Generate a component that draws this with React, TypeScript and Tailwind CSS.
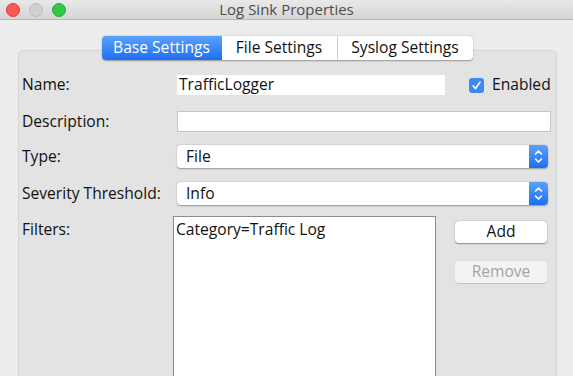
import React from "react";

function Stepper() {
  return (
    <div className="w-[19px] h-full rounded-r-[4px] bg-gradient-to-b from-[#5aa1fb] to-[#1c6ef2] flex items-center justify-center">
      <svg width="9" height="15" viewBox="0 0 9 15" fill="none" stroke="white" strokeWidth="1.6" strokeLinecap="round" strokeLinejoin="round">
        <path d="M1.5 5 L4.5 2 L7.5 5" />
        <path d="M1.5 10 L4.5 13 L7.5 10" />
      </svg>
    </div>
  );
}

function Select({ value }: { value: string }) {
  return (
    <div className="ml-[155px] w-[371px] h-[23px] bg-white rounded-[4px] shadow-[0_0.5px_1.5px_rgba(0,0,0,0.35)] flex items-stretch">
      <div className="flex-1 pl-[9px] flex items-center">{value}</div>
      <Stepper />
    </div>
  );
}

export default function App() {
  return (
    <div
      className="w-[573px] h-[376px] bg-[#ececec] overflow-hidden flex flex-col text-[15.6px] text-[#111]"
      style={{ fontFamily: '"Open Sans", "DejaVu Sans", sans-serif' }}
    >
      {/* Title bar */}
      <div className="h-[20px] shrink-0 bg-gradient-to-b from-[#e9e9e9] to-[#d5d5d5] border-b border-[#b8b8b8] flex items-center relative">
        <div className="flex items-center gap-[9px] pl-[6px]">
          <div className="w-[14px] h-[14px] rounded-full bg-[#fc5753] border border-[#df3d39]" />
          <div className="w-[14px] h-[14px] rounded-full bg-[#d0d0d0] border border-[#bdbdbd]" />
          <div className="w-[14px] h-[14px] rounded-full bg-[#33c748] border border-[#27aa35]" />
        </div>
        <div className="absolute inset-0 flex items-center justify-center text-[15px] text-[#4d4d4d]">Log Sink Properties</div>
      </div>

      {/* Body */}
      <div className="flex-1 relative pt-[16px]">
        {/* Tabs */}
        <div className="flex justify-center relative z-10 pl-[1px]">
          <div className="flex h-[24px] rounded-[4px] shadow-[0_0.5px_1.5px_rgba(0,0,0,0.35)] bg-white">
            <div className="w-[120px] rounded-l-[4px] bg-gradient-to-b from-[#5aa1fb] to-[#1c6ef2] text-white flex items-center justify-center">Base Settings</div>
            <div className="w-[116px] border-r border-[#d0d0d0] flex items-center justify-center">File Settings</div>
            <div className="w-[135px] flex items-center justify-center">Syslog Settings</div>
          </div>
        </div>

        {/* Panel */}
        <div className="absolute left-[18px] top-[30px] w-[539px] h-[400px] bg-[#e3e3e3] border border-[#d6d6d6] rounded-[5px] pt-[24px] pl-[3px]">
          {/* Name */}
          <div className="flex items-center h-[20px]">
            <div className="w-[155px]">Name:</div>
            <div className="w-[268px] h-[20px] bg-white flex items-center pl-[2px]">TrafficLogger</div>
            <div className="ml-[24px] flex items-center">
              <div className="w-[15px] h-[15px] rounded-[3px] bg-[#3b88f7] flex items-center justify-center">
                <svg width="11" height="11" viewBox="0 0 11 11" fill="none" stroke="white" strokeWidth="1.6" strokeLinecap="round" strokeLinejoin="round">
                  <path d="M2 5.8 L4.4 8.4 L9 2.2" />
                </svg>
              </div>
              <span className="ml-[8px]">Enabled</span>
            </div>
          </div>

          {/* Description */}
          <div className="flex items-center h-[21px] mt-[16px]">
            <div className="w-[155px]">Description:</div>
            <div className="w-[374px] h-[21px] bg-white border border-[#c4c4c4]" />
          </div>

          {/* Type */}
          <div className="relative h-[23px] mt-[13px] flex items-center">
            <div className="absolute left-0">Type:</div>
            <Select value="File" />
          </div>

          {/* Severity */}
          <div className="relative h-[23px] mt-[14px] flex items-center">
            <div className="absolute left-0">Severity Threshold:</div>
            <Select value="Info" />
          </div>

          {/* Filters */}
          <div className="flex mt-[11px]">
            <div className="w-[151px] pt-[2px]">Filters:</div>
            <div className="w-[263px] h-[200px] bg-white border border-[#8c8c8c] pl-[2px] pt-[1px]">Category=Traffic Log</div>
            <div className="ml-[19px] pt-[5px] flex flex-col gap-[18px]">
              <div className="w-[92px] h-[22px] bg-white rounded-[4px] shadow-[0_0.5px_1.5px_rgba(0,0,0,0.4)] flex items-center justify-center">Add</div>
              <div className="w-[92px] h-[22px] bg-[#f3f3f3] rounded-[4px] shadow-[0_0.5px_1px_rgba(0,0,0,0.15)] text-[#a3a3a3] flex items-center justify-center">Remove</div>
            </div>
          </div>
        </div>
      </div>
    </div>
  );
}
